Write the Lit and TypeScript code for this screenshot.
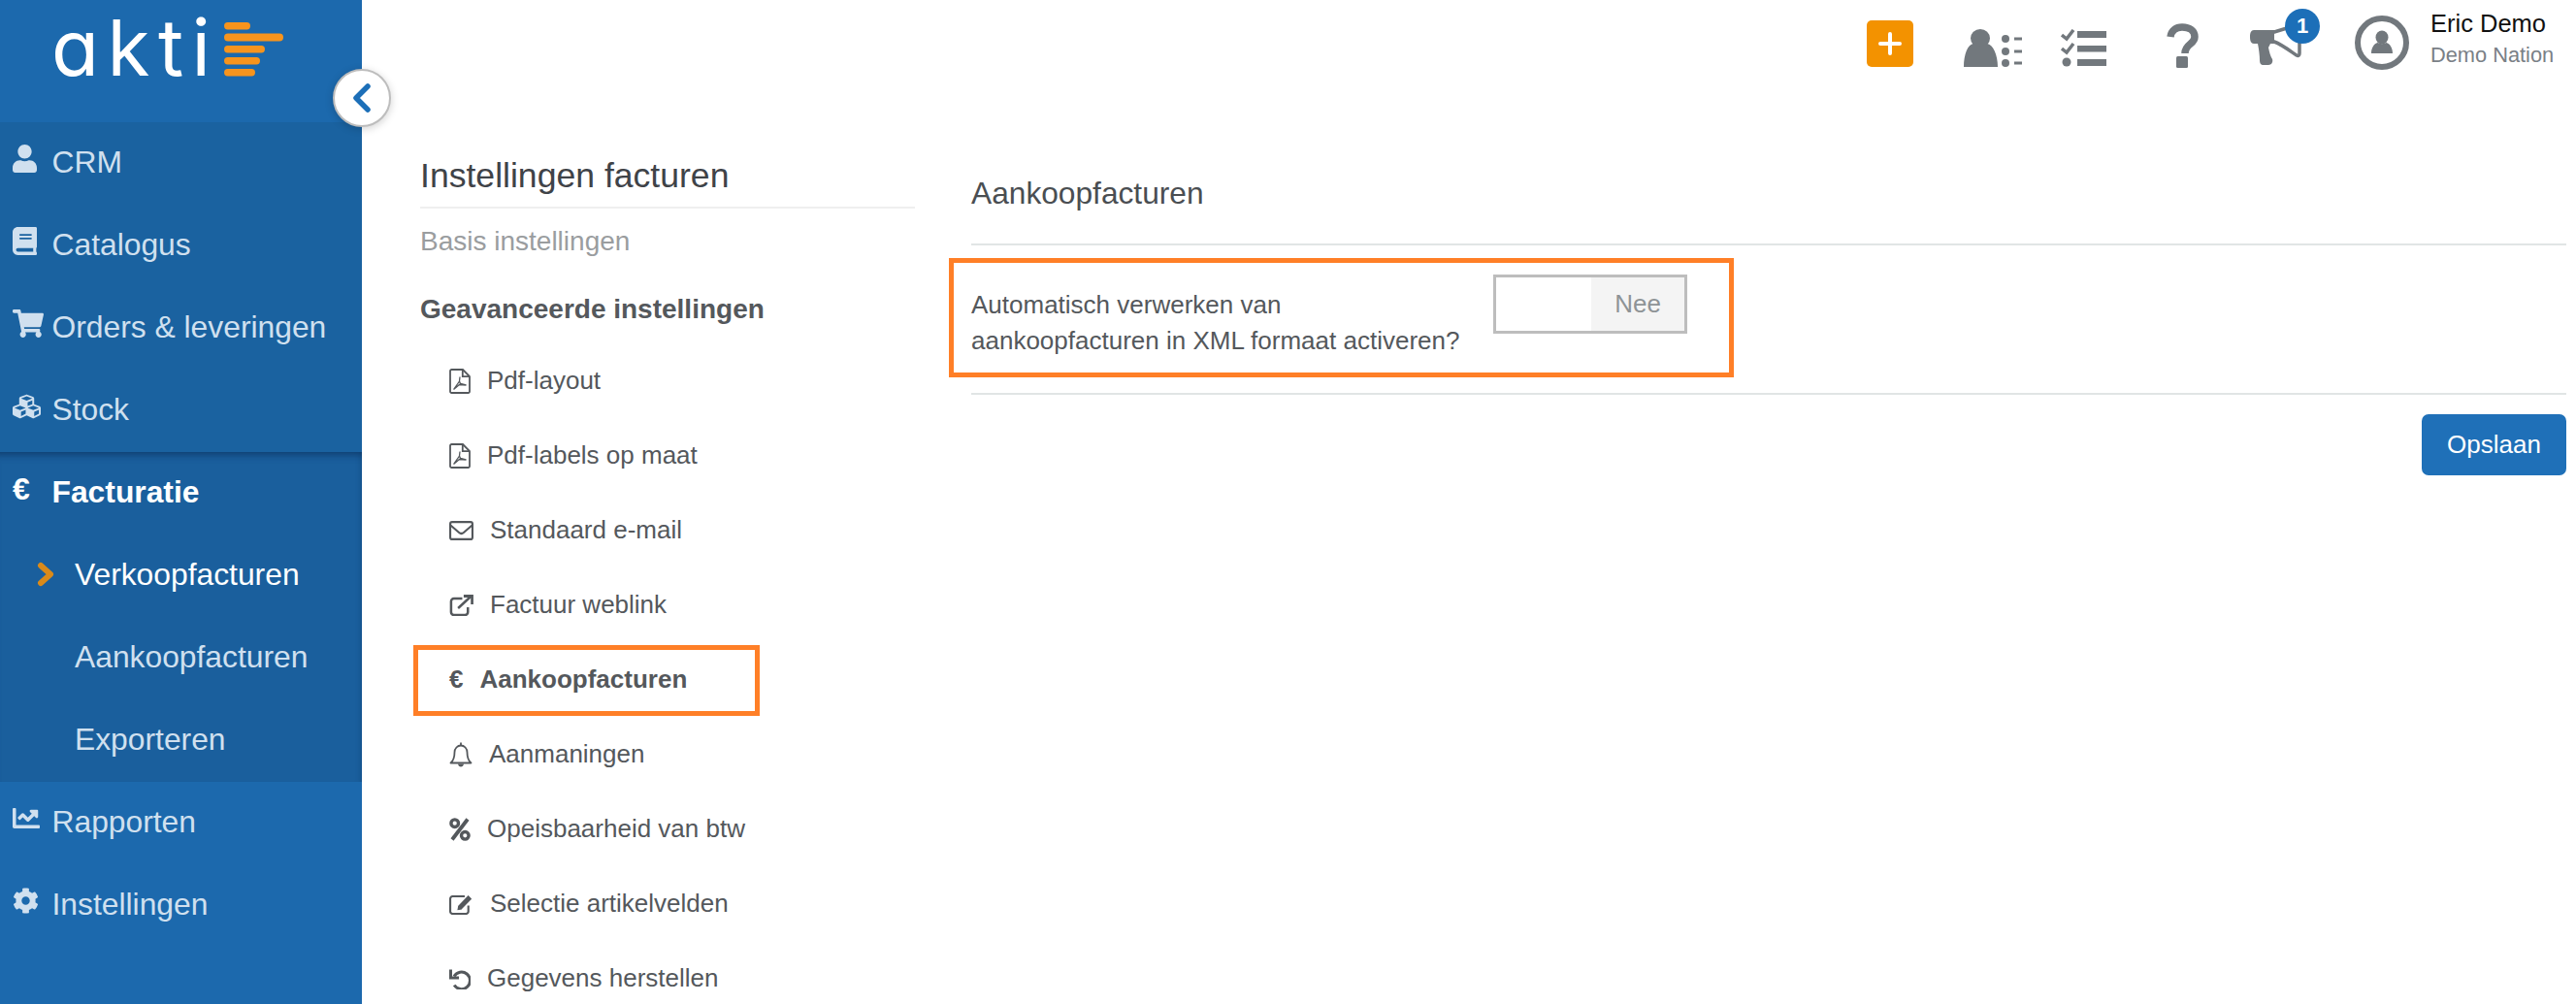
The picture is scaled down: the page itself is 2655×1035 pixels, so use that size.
import { LitElement, html, css } from "lit";
import { customElement } from "lit/decorators.js";

const ic = {
  user: ["0 0 448 512", "M224 256c70.700 0 128-57.300 128-128S294.700 0 224 0 96 57.300 96 128s57.300 128 128 128zm89.600 32h-16.700c-22.200 10.200-46.900 16-72.900 16s-50.600-5.800-72.900-16h-16.700C60.200 288 0 348.200 0 422.400V464c0 26.500 21.500 48 48 48h352c26.500 0 48-21.500 48-48v-41.600c0-74.200-60.200-134.400-134.400-134.400z"],
  book: ["0 0 448 512", "M448 360V24c0-13.300-10.700-24-24-24H96C43 0 0 43 0 96v320c0 53 43 96 96 96h328c13.300 0 24-10.700 24-24v-16c0-7.500-3.500-14.300-8.900-18.700-4.200-15.400-4.200-59.300 0-74.700 5.400-4.300 8.900-11.100 8.900-18.600zM128 134c0-3.300 2.700-6 6-6h212c3.300 0 6 2.700 6 6v20c0 3.300-2.700 6-6 6H134c-3.300 0-6-2.700-6-6v-20zm0 64c0-3.300 2.700-6 6-6h212c3.300 0 6 2.700 6 6v20c0 3.300-2.700 6-6 6H134c-3.300 0-6-2.700-6-6v-20zm253.400 250H96c-17.700 0-32-14.300-32-32 0-17.600 14.400-32 32-32h285.400c-1.900 17.100-1.900 46.900 0 64z"],
  cart: ["0 0 576 512", "M528.120 301.319l47.273-208C578.806 78.301 567.391 64 551.990 64H159.208l-9.166-44.810C147.758 8.021 137.930 0 126.529 0H24C10.745 0 0 10.745 0 24v16c0 13.255 10.745 24 24 24h69.883l70.248 343.435C147.325 417.100 136 435.222 136 456c0 30.928 25.072 56 56 56s56-25.072 56-56c0-15.674-6.447-29.835-16.824-40h209.647C430.447 426.165 424 440.326 424 456c0 30.928 25.072 56 56 56s56-25.072 56-56c0-22.172-12.888-41.332-31.579-50.405l5.517-24.276c3.413-15.018-8.002-29.319-23.403-29.319H218.117l-6.545-32h293.145c11.206 0 20.920-7.754 23.403-18.681z"],
  cubes: ["0 0 512 512", "M488.600 250.200L392 214V105.500c0-15-9.300-28.400-23.400-33.700l-100-37.500c-8.100-3.100-17.100-3.100-25.300 0l-100 37.500c-14.100 5.300-23.400 18.700-23.400 33.700V214l-96.600 36.200C9.300 255.500 0 268.900 0 283.900V394c0 13.600 7.700 26.100 19.900 32.200l100 50c10.100 5.100 22.100 5.100 32.200 0l103.900-52 103.900 52c10.100 5.100 22.100 5.100 32.200 0l100-50c12.200-6.100 19.900-18.600 19.900-32.200V283.900c0-15-9.300-28.400-23.400-33.700zM358 214.800l-85 31.900v-68.200l85-37v73.300zM154 104.100l102-38.200 102 38.200v.6l-102 41.400-102-41.400v-.6zm84 291.100l-85 42.500v-79.100l85-38.800v75.400zm0-112l-102 41.400-102-41.400v-.6l102-38.200 102 38.200v.6zm240 112l-85 42.500v-79.100l85-38.800v75.400zm0-112l-102 41.400-102-41.400v-.6l102-38.200 102 38.200v.6z"],
  chart: ["0 64 512 384", "M496 384H64V80c0-8.840-7.160-16-16-16H16C7.160 64 0 71.160 0 80v336c0 17.670 14.330 32 32 32h464c8.840 0 16-7.160 16-16v-32c0-8.840-7.160-16-16-16zM464 96H345.940c-21.380 0-32.090 25.850-16.970 40.970l32.400 32.400L288 242.750l-73.370-73.370c-12.500-12.500-32.760-12.500-45.250 0l-68.690 68.690c-6.250 6.250-6.250 16.380 0 22.630l22.620 22.620c6.250 6.250 16.380 6.250 22.630 0L192 237.250l73.370 73.370c12.500 12.500 32.760 12.500 45.250 0l96-96 32.400 32.400c15.120 15.120 40.970 4.410 40.970-16.970V112c.01-8.840-7.150-16-16-16z"],
  cog: ["0 0 512 512", "M487.400 315.700l-42.600-24.600c4.300-23.200 4.300-47 0-70.200l42.600-24.600c4.900-2.800 7.100-8.600 5.500-14-11.100-35.600-30-67.800-54.700-94.600-3.800-4.100-10-5.100-14.800-2.300L380.800 110c-17.900-15.400-38.500-27.300-60.800-35.100V25.800c0-5.600-3.900-10.500-9.400-11.700-36.700-8.200-74.300-7.800-109.200 0-5.500 1.200-9.400 6.100-9.400 11.700V75c-22.200 7.900-42.800 19.800-60.800 35.100L88.700 85.500c-4.900-2.800-11-1.900-14.800 2.300-24.700 26.700-43.600 58.900-54.700 94.600-1.700 5.400.6 11.200 5.500 14L67.300 221c-4.300 23.200-4.300 47 0 70.200l-42.600 24.600c-4.900 2.800-7.100 8.600-5.500 14 11.100 35.600 30 67.800 54.700 94.600 3.800 4.100 10 5.100 14.800 2.300l42.600-24.600c17.900 15.400 38.500 27.300 60.800 35.100v49.200c0 5.600 3.900 10.500 9.400 11.700 36.700 8.200 74.300 7.800 109.200 0 5.500-1.200 9.400-6.100 9.400-11.700v-49.200c22.200-7.900 42.800-19.800 60.800-35.100l42.600 24.600c4.900 2.800 11 1.900 14.800-2.300 24.700-26.700 43.600-58.900 54.700-94.600 1.500-5.500-.7-11.300-5.600-14.100zM256 336c-44.100 0-80-35.900-80-80s35.900-80 80-80 80 35.900 80 80-35.900 80-80 80z"],
} as Record<string, [string, string]>;

const icon = (name: string, w: number, h: number) => html`<svg class="ico" width=${w} height=${h} viewBox=${ic[name][0]} preserveAspectRatio="none"><path d=${ic[name][1]} fill="currentColor"></path></svg>`;

const pdfIcon = () => html`<svg class="ico" width="22" height="26" viewBox="0 0 22 26" fill="none" stroke="currentColor" stroke-width="1.800"><path d="M1 2.500a1.500 1.500 0 0 1 1.500-1.500H14l7 7v15.500a1.500 1.500 0 0 1-1.500 1.500h-17A1.500 1.500 0 0 1 1 23.500z"></path><path d="M13.800 1.200V8.200H20.800"></path><path d="M4.500 21.500 10.500 13 11 8.500M10.500 13 11.500 15.500 17.500 17 10.500 16.500 4.500 21.500" stroke-width="1.300"></path></svg>`;
const mailIcon = () => html`<svg class="ico" width="25" height="20" viewBox="0 0 26 20" preserveAspectRatio="none" fill="none" stroke="currentColor" stroke-width="2.200"><rect x="1.100" y="1.100" width="23.800" height="17.800" rx="2"></rect><path d="M1.500 4.500 10.500 12c1.500 1.200 3.500 1.200 5 0L24.500 4.500"></path></svg>`;
const linkIcon = () => html`<svg class="ico" width="25" height="22" viewBox="0 0 26 22" preserveAspectRatio="none" fill="none" stroke="currentColor" stroke-width="2.600"><path d="M14 4H5a3 3 0 0 0-3 3v11a3 3 0 0 0 3 3h12a3 3 0 0 0 3-3v-5"></path><path d="M9.500 14 23 2"></path><path d="M15.500 1.500h9v8.500" stroke-width="2.800"></path></svg>`;
const bellIcon = () => html`<svg class="ico" width="24" height="26" viewBox="0 0 24 26" fill="none" stroke="currentColor" stroke-width="1.800"><path d="M12 .5v3"></path><path d="M1.500 21.500C4.500 19 5.500 15 5.500 10.500 5.500 6.500 8.500 3.500 12 3.500s6.500 3 6.500 7c0 4.500 1 8.500 4 11z" stroke-linejoin="round"></path><path d="M9 22.500c.5 4 5.500 4 6 0z" fill="currentColor" stroke="none"></path></svg>`;
const percentIcon = () => html`<svg class="ico" width="22" height="24" viewBox="0 0 22 24" fill="none" stroke="currentColor" stroke-width="3.400"><circle cx="5.700" cy="5.700" r="3.800"></circle><circle cx="16.300" cy="18.300" r="3.800"></circle><path d="M19 1.500 3 22.500" stroke-width="3.800"></path></svg>`;
const editIcon = () => html`<svg class="ico" width="25" height="22" viewBox="0 0 26 22" preserveAspectRatio="none" fill="none" stroke="currentColor" stroke-width="2.200"><path d="M20.500 12.500v6a2.500 2.500 0 0 1-2.500 2.500H3.600a2.500 2.500 0 0 1-2.500-2.500V5.500A2.500 2.500 0 0 1 3.600 3h13"></path><path d="M9 12.500 19.700 1.800a1 1 0 0 1 1.400 0l3.100 3.100a1 1 0 0 1 0 1.400L13.500 17 8 18z" fill="currentColor" stroke="#fff" stroke-width="1.200"></path></svg>`;
const undoIcon = () => html`<svg class="ico" width="22" height="22" viewBox="0 0 22 22" fill="none" stroke="currentColor" stroke-width="3"><path d="M5 8.500A8.800 8.800 0 1 1 5.200 17.500"></path><path d="M1.500 1.500V10H10" stroke-width="3" fill="none"></path></svg>`;

const topNav = [
  ["user", 25, 29, "CRM"],
  ["book", 25, 29, "Catalogus"],
  ["cart", 32, 29, "Orders & leveringen"],
  ["cubes", 29, 28, "Stock"],
] as [string, number, number, string][];

const settings = [
  [pdfIcon, "Pdf-layout"],
  [pdfIcon, "Pdf-labels op maat"],
  [mailIcon, "Standaard e-mail"],
  [linkIcon, "Factuur weblink"],
  [null, "Aankoopfacturen"],
  [bellIcon, "Aanmaningen"],
  [percentIcon, "Opeisbaarheid van btw"],
  [editIcon, "Selectie artikelvelden"],
  [undoIcon, "Gegevens herstellen"],
] as [null | (() => unknown), string][];

@customElement("app-root")
export class AppRoot extends LitElement {
  static styles = css`
    :host { display: block; font-family: "Liberation Sans", Arial, sans-serif; color: #54585c; }
    * { box-sizing: border-box; }
    .page { display: flex; height: 1035px; overflow: hidden; position: relative; background: #fff; }
    .side { width: 373px; flex: none; background: #1c69ad; color: #d0e0ef; position: relative; }
    .logo { height: 126px; display: flex; align-items: flex-start; padding-left: 53px; }
    .wordmark { font-family: Inter, "Open Sans", sans-serif; font-weight: 400; font-size: 80px; line-height: 97px; letter-spacing: 8.500px; color: #fff; font-feature-settings: "cv11" 1; }
    .bars { margin: 23px 81px 0 auto; }
    .collapse { position: absolute; left: 343px; top: 71px; width: 60px; height: 60px; border-radius: 50%; background: #fff; border: 2px solid #bdbdbd; box-shadow: 0 2px 8px rgba(0,0,0,.18); display: flex; align-items: center; justify-content: center; z-index: 2; }
    .group-a { background: #1a62a0; }
    .group-b { background: #1a5f9d; box-shadow: inset 0 10px 8px -8px rgba(10,40,80,.7), inset -6px 0 6px -6px rgba(10,40,80,.35); }
    .row { height: 85px; display: flex; align-items: center; padding-left: 13px; font-size: 31.800px; }
    .row .ic { width: 40.500px; flex: none; display: flex; margin-top: -10px; }
    .row .tx { margin-top: -3px; }
    .row.head { color: #fff; font-weight: 700; }
    .euro-big { font-size: 32px; font-weight: 700; line-height: 32px; }
    .sub { padding-left: 77px; position: relative; }
    .sub.on { color: #fff; }
    .mark { position: absolute; left: 38px; top: 28px; display: flex; }

    .content { flex: 1; min-width: 0; display: flex; flex-direction: column; }
    .top { height: 90px; flex: none; display: flex; justify-content: flex-end; align-items: flex-start; padding-right: 22px; color: #72787d; }
    .plus { width: 48px; height: 48px; margin-top: 21px; border-radius: 5px; background: #f39200; display: flex; align-items: center; justify-content: center; }
    .t1 { margin: 30px 0 0 52px; }
    .t2 { margin: 30px 0 0 40px; }
    .t3 { margin: 24px 0 0 61px; }
    .t4 { margin: 30px 0 0 53px; position: relative; width: 52px; height: 37px; }
    .t4 svg { overflow: visible; display: block; }
    .badge { position: absolute; left: 36px; top: -21px; width: 36px; height: 36px; border-radius: 50%; background: #1c6fb8; color: #fff; font-size: 22px; font-weight: 700; display: flex; align-items: center; justify-content: center; }
    .t5 { margin: 16px 0 0 56px; }
    .who { margin: 8px 0 0 22px; width: 128px; }
    .who .n { font-size: 25.500px; line-height: 33px; color: #111; white-space: nowrap; }
    .who .o { font-size: 21.800px; line-height: 32px; color: #7a8086; white-space: nowrap; }

    .body { flex: 1; display: grid; grid-template-columns: 510px 1fr; column-gap: 58px; padding: 0 10px 0 60px; min-height: 0; }
    .title { font-size: 35.600px; line-height: 40px; color: #3f4348; padding: 71px 0 12px; border-bottom: 2px solid #efefef; }
    .basis { font-size: 28px; line-height: 40px; color: #9a9d9f; margin-top: 14px; }
    .adv { font-size: 28px; line-height: 40px; font-weight: 700; margin-top: 30px; }
    .list { margin-top: 16.500px; }
    .item { height: 77px; display: flex; align-items: center; gap: 17px; padding-left: 30px; font-size: 26px; position: relative; }
    .item.on { font-weight: 700; }
    .item .ico { margin-top: -3px; flex: none; }
    .item .tx { margin-top: -4px; }
    .euro-sm { font-size: 26px; font-weight: 700; margin-top: -4px; }
    .note1 { position: absolute; left: -7px; top: 1.500px; width: 357px; height: 73px; border: 5px solid #ff7f27; pointer-events: none; }

    .main { min-width: 0; display: flex; flex-direction: column; }
    .h2 { font-size: 31.700px; line-height: 40px; color: #4a4e52; padding: 89px 0 32px; border-bottom: 2px solid #e1e5e5; }
    .field { position: relative; display: flex; align-items: flex-start; padding: 30px 0 35px; border-bottom: 2px solid #e1e5e5; }
    .label { width: 538px; flex: none; font-size: 26px; line-height: 37px; margin-top: 12.500px; }
    .toggle { width: 200px; height: 61px; border: 3px solid #bdbdbd; display: flex; background: #fff; }
    .toggle .left { width: 98px; }
    .toggle .right { flex: 1; background: #f4f4f4; color: #8e9396; font-size: 26px; display: flex; align-items: center; justify-content: center; }
    .note2 { position: absolute; left: -23px; top: 13px; width: 809px; height: 123px; border: 5px solid #ff7f27; pointer-events: none; }
    .save { align-self: flex-end; margin-top: 20px; width: 149px; height: 63px; border: 0; border-radius: 7px; background: #1f70b8; color: #fff; font: 26px "Liberation Sans", Arial, sans-serif; }
  `;

  render() {
    return html`<div class="page">
      <aside class="side">
        <div class="logo">
          <span class="wordmark">akti</span>
          <svg class="bars" width="61" height="56" viewBox="0 0 61 56" fill="#f7941d">
            <rect x="0" y="0" width="27" height="7.500" rx="3.700"></rect>
            <rect x="0" y="11.500" width="61" height="8" rx="4"></rect>
            <rect x="0" y="24" width="42" height="7.500" rx="3.700"></rect>
            <rect x="0" y="36" width="37" height="7.500" rx="3.700"></rect>
            <rect x="0" y="48" width="32" height="7.500" rx="3.700"></rect>
          </svg>
        </div>
        <div class="collapse">
          <svg width="20" height="30" viewBox="0 0 20 30" fill="none" stroke="#1c6fb8" stroke-width="5.500" stroke-linecap="round" stroke-linejoin="round"><path d="M16 3 4 15l12 12"></path></svg>
        </div>
        <div class="group-a">
          ${topNav.map(([n, w, h, t]) => html`<div class="row"><span class="ic">${icon(n, w, h)}</span><span class="tx">${t}</span></div>`)}
        </div>
        <div class="group-b">
          <div class="row head"><span class="ic"><span class="euro-big">€</span></span><span class="tx">Facturatie</span></div>
          <div class="row sub on"><span class="mark"><svg width="18" height="26" viewBox="0 0 18 26" fill="none" stroke="#d98a1a" stroke-width="6" stroke-linecap="round" stroke-linejoin="round"><path d="M4 4 14 13 4 22"></path></svg></span><span class="tx">Verkoopfacturen</span></div>
          <div class="row sub"><span class="tx">Aankoopfacturen</span></div>
          <div class="row sub"><span class="tx">Exporteren</span></div>
        </div>
        <div class="row"><span class="ic">${icon("chart", 28, 21)}</span><span class="tx">Rapporten</span></div>
        <div class="row"><span class="ic">${icon("cog", 27, 27)}</span><span class="tx">Instellingen</span></div>
      </aside>

      <div class="content">
        <header class="top">
          <div class="plus"><svg width="24" height="24" viewBox="0 0 24 24" stroke="#fff" stroke-width="4" stroke-linecap="round"><path d="M12 2v20M2 12h20"></path></svg></div>
          <svg class="t1" width="60" height="39" viewBox="0 0 60 39" fill="currentColor">
            <ellipse cx="17" cy="9.500" rx="10" ry="9.500"></ellipse>
            <path d="M0 39c0-13 4-23 10-24 4 3 10 3 14 0 6 1 11 11 11 24z"></path>
            <circle cx="43" cy="10" r="4"></circle><circle cx="43" cy="23" r="4"></circle><circle cx="43" cy="35" r="4"></circle>
            <rect x="52" y="8.500" width="8" height="3"></rect><rect x="52" y="21.500" width="8" height="3"></rect><rect x="52" y="33.500" width="8" height="3"></rect>
          </svg>
          <svg class="t2" width="47" height="39" viewBox="0 0 47 39" fill="currentColor">
            <path d="M1 6l5 4 7-9" fill="none" stroke="currentColor" stroke-width="3.500"></path>
            <path d="M1 20l5 4 7-9" fill="none" stroke="currentColor" stroke-width="3.500"></path>
            <ellipse cx="6" cy="34" rx="4.500" ry="4.500"></ellipse>
            <rect x="17" y="2" width="30" height="7"></rect><rect x="17" y="17" width="30" height="6.500"></rect><rect x="17" y="31" width="30" height="7"></rect>
          </svg>
          <svg class="t3" width="34" height="46" viewBox="0 0 34 46" fill="currentColor">
            <path d="M5 14 C6 7 11 4 17 4 C25 4 30 8 30 14 C30 22 20 21 20 31" fill="none" stroke="currentColor" stroke-width="7.500"></path>
            <rect x="11" y="34" width="12" height="12" rx="1.500"></rect>
          </svg>
          <div class="t4">
            <svg width="52" height="37" viewBox="0 0 52 37" fill="currentColor">
              <path d="M4 1H25V15H21L19 19C20 24 21 28 23 31C24 34 22 37 19 37H14C11 37 10 35 10 32C10 27 9 20 8 15H4C1 15 0 12 0 8C0 4 1 1 4 1Z"></path>
              <path d="M25 3 38 -1M25 13C33 16 42 23 48 27C50 28 51 27 51 25V14" fill="none" stroke="currentColor" stroke-width="3.500" stroke-linecap="round"></path>
            </svg>
            <span class="badge">1</span>
          </div>
          <svg class="t5" width="56" height="56" viewBox="0 0 56 56" fill="currentColor">
            <circle cx="28" cy="28" r="25" fill="none" stroke="currentColor" stroke-width="6"></circle>
            <ellipse cx="28" cy="22.500" rx="6.500" ry="7"></ellipse>
            <path d="M17 39c0-6 3-10 6.500-11 3 1.500 6 1.500 9 0C36 29 39 33 39 39z"></path>
          </svg>
          <div class="who"><div class="n">Eric Demo</div><div class="o">Demo Nation</div></div>
        </header>

        <div class="body">
          <section>
            <div class="title">Instellingen facturen</div>
            <div class="basis">Basis instellingen</div>
            <div class="adv">Geavanceerde instellingen</div>
            <div class="list">
              ${settings.map(([ico, t]) => html`<div class="item ${ico ? "" : "on"}">
                ${ico ? ico() : html`<span class="euro-sm">€</span>`}
                <span class="tx">${t}</span>
                ${ico ? "" : html`<span class="note1"></span>`}
              </div>`)}
            </div>
          </section>
          <section class="main">
            <div class="h2">Aankoopfacturen</div>
            <div class="field">
              <div class="label">Automatisch verwerken van<br />aankoopfacturen in XML formaat activeren?</div>
              <div class="toggle"><span class="left"></span><span class="right">Nee</span></div>
              <span class="note2"></span>
            </div>
            <button class="save">Opslaan</button>
          </section>
        </div>
      </div>
    </div>`;
  }
}
